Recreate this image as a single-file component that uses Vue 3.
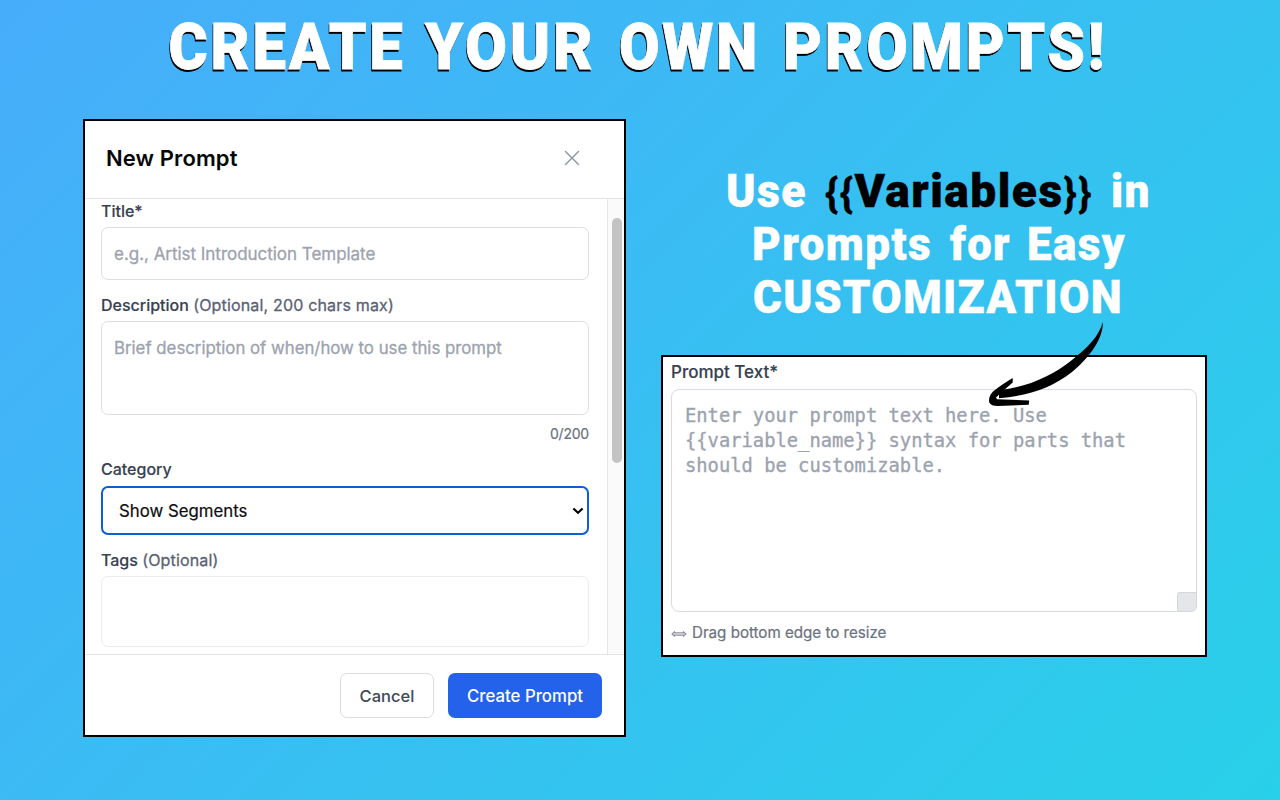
<script setup>
const titleWords = [
  { text: 'CREATE', x: 168.5, w: 237 },
  { text: 'YOUR', x: 425, w: 170.5 },
  { text: 'OWN', x: 619, w: 141 },
  { text: 'PROMPTS!', x: 783, w: 324 }
]
const subtitleWords = [
  { parts: ['Use'], x: 65, y: 87, w: 81 },
  { parts: ['{{', 'Variables', '}}'], x: 164, y: 87, w: 268, dark: true },
  { parts: ['in'], x: 450, y: 87, w: 40 },
  { parts: ['Prompts'], x: 91, y: 140, w: 180 },
  { parts: ['for'], x: 289, y: 140, w: 61 },
  { parts: ['Easy'], x: 366, y: 140, w: 99 },
  { parts: ['CUSTOMIZATION'], x: 92, y: 193, w: 370 }
]
const placeholder = 'Enter your prompt text here. Use\n{{variable_name}} syntax for parts that\nshould be customizable.'
const isBrace = (part) => part === '{{' || part === '}}'
</script>

<template>
  <main class="page">
    <svg class="title" width="1280" height="119" role="heading">
      <g class="title-shadow">
        <text v-for="w in titleWords" :key="w.text" :x="w.x - 0.7" y="71" :textLength="w.w" lengthAdjust="spacingAndGlyphs">{{ w.text }}</text>
      </g>
      <g class="title-face">
        <text v-for="w in titleWords" :key="w.text" :x="w.x" y="69" :textLength="w.w" lengthAdjust="spacingAndGlyphs">{{ w.text }}</text>
      </g>
    </svg>

    <div class="columns">
      <section class="dialog">
        <header class="dialog-head">
          <h2>New Prompt</h2>
          <svg class="close" width="16" height="16" viewBox="0 0 16 16"><path d="M1.5 1.5 14.5 14.5M14.5 1.5 1.5 14.5" /></svg>
        </header>
        <div class="dialog-body">
          <form class="form">
            <label class="label">Title*</label>
            <div class="field title-field">e.g., Artist Introduction Template</div>
            <label class="label desc-label">Description <span>(Optional, 200 chars max)</span></label>
            <div class="field desc-field">Brief description of when/how to use this prompt</div>
            <div class="count">0/200</div>
            <label class="label">Category</label>
            <div class="select">
              <span>Show Segments</span>
              <svg width="12" height="8" viewBox="0 0 12 8"><path d="M1.4 1.500 6 5.800 10.600 1.500" /></svg>
            </div>
            <label class="label tags-label">Tags <span>(Optional)</span></label>
            <div class="field tags-field"></div>
          </form>
          <div class="track"><div class="thumb"></div></div>
        </div>
        <footer class="dialog-foot">
          <button class="btn cancel">Cancel</button>
          <button class="btn create">Create Prompt</button>
        </footer>
      </section>

      <section class="right">
        <svg class="subtitle" width="546" height="236">
          <text v-for="w in subtitleWords" :key="w.x + '-' + w.y" :class="{ dark: w.dark }" :x="w.x" :y="w.y" :textLength="w.w" lengthAdjust="spacingAndGlyphs"><tspan v-for="p in w.parts" :key="p" :class="{ brace: isBrace(p) }">{{ p }}</tspan></text>
        </svg>
        <div class="prompt-card">
          <label class="label prompt-label">Prompt Text*</label>
          <div class="prompt-area">{{ placeholder }}<i class="grip"></i></div>
          <div class="hint">
            <svg width="16" height="8" viewBox="0 0 16 8"><path d="M4 1.500 1 4 4 6.500M12 1.500 15 4 12 6.500M2.500 2.900H13.500M2.500 5.100H13.500" /></svg>
            <span>Drag bottom edge to resize</span>
          </div>
        </div>
        <svg class="arrow" width="120" height="90" viewBox="985 320 120 90">
          <path d="M1102.800 322C1103.500 338 1090 357 1072 372C1052 388 1027 396 999 398.300L999 393L1002.500 389.800C1028 386.500 1052 376 1072 360C1088 347.500 1099 336 1102.800 322Z" />
          <path d="M1012.700 378L1012.700 382.500L1003 391L996 397.500L997 399.300L1029.200 400.500L1028.700 404.800L998 406Q991 406 989.300 402.500Q988 397 993 391.500Q1001 385 1012.700 378Z" />
        </svg>
      </section>
    </div>
  </main>
</template>

<style>
body { margin: 0; }
</style>

<style scoped>
.page {
  width: 1280px;
  height: 800px;
  overflow: hidden;
  background: linear-gradient(135deg, #47adfb 0%, #29d0e9 100%);
  font-family: Inter, "Liberation Sans", sans-serif;
  color: #374151;
}
.page * { box-sizing: border-box; }
.title { display: block; font: 900 65px Roboto, sans-serif; letter-spacing: 3px; }
.title-face { fill: #fff; stroke: #fff; stroke-width: 0.8; }
.title-shadow { fill: #000; stroke: #000; stroke-width: 0.8; }
.columns { display: flex; align-items: flex-start; gap: 35px; padding-left: 83px; }
.dialog {
  width: 543px;
  height: 618px;
  border: 2px solid #000;
  background: #fff;
  display: flex;
  flex-direction: column;
}
.dialog-head {
  height: 78px;
  border-bottom: 1px solid #e2e4e8;
  display: flex;
  align-items: center;
  justify-content: space-between;
  padding: 0 44px 3px 21px;
}
h2 { margin: 0; font-size: 22px; font-weight: 600; letter-spacing: 0.1px; color: #060709; }
.close path { fill: none; stroke: #9299a6; stroke-width: 1.5; stroke-linecap: round; }
.dialog-body { height: 456px; display: flex; justify-content: space-between; border-bottom: 1px solid #e2e4e8; }
.form { width: 504px; padding: 2px 0 0 16px; display: flex; flex-direction: column; }
.label { font-size: 16px; line-height: 20px; font-weight: 500; color: #374151; white-space: pre; -webkit-text-stroke: 0.15px #374151; }
.label span { font-weight: 400; letter-spacing: 0.17px; color: #596273; -webkit-text-stroke: 0.3px #596273; }
.field {
  border: 1.5px solid #dcdee4;
  border-radius: 7px;
  color: #9ca3af;
  padding: 0 11px 0 12px;
  -webkit-text-stroke: 0.3px #9ca3af;
}
.title-field { height: 53px; margin-top: 6px; font-size: 17px; letter-spacing: -0.03px; line-height: 53px; }
.desc-label { margin-top: 15px; }
.desc-field { height: 94px; margin-top: 6px; font-size: 16.8px; line-height: 24px; padding-top: 14px; }
.count { height: 20px; margin: 9px 0 15px; text-align: right; font-size: 14px; line-height: 20px; letter-spacing: -0.2px; color: #6b7280; -webkit-text-stroke: 0.2px #6b7280; }
.select {
  height: 49px;
  margin-top: 7px;
  border: 2px solid #0b5fd3;
  border-radius: 7px;
  padding: 0 3px 0 16px;
  display: flex;
  align-items: center;
  justify-content: space-between;
  font-size: 16.8px;
  color: #0c0d0f;
  -webkit-text-stroke: 0.2px #0c0d0f;
}
.select path { fill: none; stroke: #000; stroke-width: 2.1; }
.tags-label { margin-top: 15px; }
.tags-field { height: 71px; margin-top: 6px; border-color: #ebecef; }
.track { width: 17px; background: #fafafa; border-left: 1px solid #e6e6e8; padding: 19px 0 0 4px; }
.thumb { width: 10px; height: 245px; border-radius: 5px; background: #c3c3c3; }
.dialog-foot { flex: 1; display: flex; justify-content: flex-end; gap: 14px; padding: 18px 22px 0 0; }
.btn { height: 45px; padding: 0; border-radius: 7px; font-family: inherit; font-weight: 500; }
.cancel { width: 94px; border: 1.5px solid #d9dce2; background: #fff; color: #414957; font-size: 16.5px; }
.create { width: 154px; border: 0; background: #2462eb; color: #fff; font-size: 16.8px; }
.right { position: relative; width: 546px; padding-top: 1px; }
.subtitle { display: block; font: 900 47px Roboto, sans-serif; letter-spacing: 1.5px; fill: #fff; stroke: #fff; stroke-width: 0.4; }
.subtitle .dark { fill: #000; stroke: #000; }
.subtitle .brace { font-size: 41px; font-weight: 700; }
.prompt-card { height: 302px; margin-top: -1px; border: 2px solid #000; background: #fff; padding: 5px 8px 0; }
.prompt-label { display: block; font-size: 17px; }
.prompt-area {
  position: relative;
  height: 223px;
  margin-top: 7px;
  padding: 13px 0 0 13px;
  border: 1.5px solid #d9dbe2;
  border-radius: 8px;
  color: #9ca3af;
  font: 18.8px/25px "DejaVu Sans Mono", monospace;
  white-space: pre;
  -webkit-text-stroke: 0.35px #9ca3af;
}
.grip { position: absolute; right: -1px; bottom: -1px; width: 20px; height: 20px; background: #e4e6ea; border: 1.5px solid #d3d6dd; border-radius: 3px 2px 6px 3px; }
.hint { display: flex; align-items: center; gap: 5px; height: 20px; margin-top: 10px; font-size: 15.2px; letter-spacing: -0.03px; color: #6b7280; -webkit-text-stroke: 0.2px #6b7280; }
.hint svg { margin-top: 4px; }
.hint path { fill: none; stroke: #8a909b; stroke-width: 1.1; }
.arrow { position: absolute; left: 324px; top: 201px; fill: #000; }
</style>
